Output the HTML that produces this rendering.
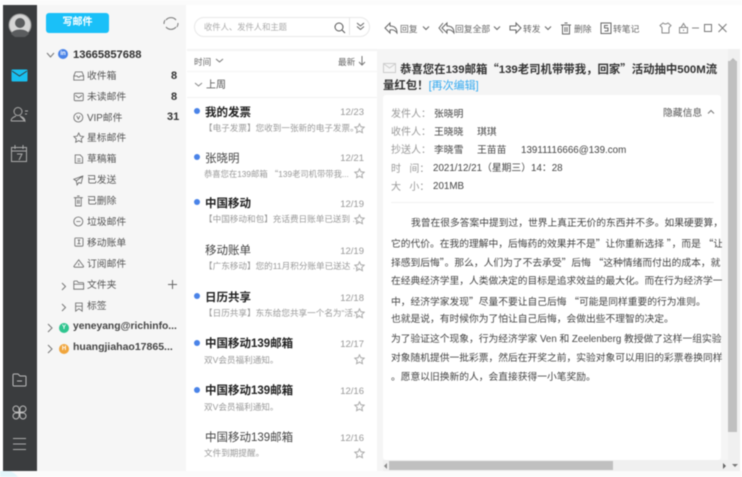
<!DOCTYPE html>
<html><head><meta charset="utf-8">
<style>
html,body{margin:0;padding:0;background:#fff}
#w{position:relative;width:742px;height:477px;overflow:hidden;background:#fff;font-family:"Liberation Sans","Noto Sans CJK SC",sans-serif;filter:blur(.45px)}
#w div,#w svg{position:absolute}
.t{white-space:nowrap;line-height:16px}
svg{fill:none;stroke:#666;stroke-width:1}
svg.ic{transform:scale(.82);transform-origin:left center;margin-left:1px}
i{font-style:normal;font-family:"Noto Sans CJK SC",sans-serif}
.f{font-size:9.8px;color:#555;left:87px;margin-top:1px}
.n{font-size:11px;font-weight:bold;color:#333}
.nm{font-size:11.5px;left:205px;color:#444;line-height:18px;white-space:nowrap;margin-top:1px}
.b{font-weight:bold;color:#222}
.d{font-size:9.5px;color:#999;left:331px;width:33px;text-align:right;line-height:14px;margin-top:1px}
.s{font-size:8.6px;color:#999;left:204px;line-height:14px;white-space:nowrap}
.dot{width:6px;height:6px;border-radius:3px;background:#4a83e8;left:194px}
.tb{font-size:8.8px;color:#666;line-height:14px;white-space:nowrap;margin-top:1px}
.lb{font-size:10px;color:#999;line-height:14px;left:391px;white-space:nowrap;margin-top:2px}
.v{font-size:9.8px;color:#444;line-height:14px;white-space:nowrap;margin-top:2px}
.p{font-size:9.75px;color:#444;line-height:14px;left:391px;width:331px;overflow:hidden;white-space:nowrap;margin-top:2px}
.bd{color:#fff;font-size:6px;font-weight:bold;text-align:center;line-height:10px;width:10px;height:10px;border-radius:5px;left:59px}
</style></head><body><div id="w">
<div style="left:0;top:0;width:742px;height:5px;background:#fbfbfb"></div>
<div style="left:3px;top:5px;width:34px;height:466px;background:#3a3c3e"></div>
<div style="left:37px;top:5px;width:149px;height:466px;background:#f6f6f6"></div>
<div style="left:186px;top:5px;width:554px;height:44px;background:#fff"></div>
<div style="left:187px;top:49px;width:190px;height:422px;background:#fff"></div>
<div style="left:187px;top:49px;width:190px;height:2px;background:#f4f4f4"></div>
<div style="left:187px;top:71px;width:190px;height:1px;background:#f4f4f4"></div>
<div style="left:187px;top:97px;width:190px;height:1px;background:#f2f2f2"></div>
<div style="left:377px;top:49px;width:363px;height:422px;background:#f5f5f5"></div>
<div style="left:383px;top:95px;width:338px;height:365px;background:#fff;border-radius:3px"></div>

<!-- left rail -->
<svg style="left:8px;top:13px;width:24px;height:24px"><circle cx="12" cy="12" r="11" fill="#d5d5d5" stroke="#999" stroke-width="1"/><circle cx="12" cy="10" r="5" fill="#5a5c5e" stroke="none"/><path d="M3 21c2-6 16-6 18 0l-4 3H7z" fill="#5a5c5e" stroke="none"/></svg>
<svg style="left:11px;top:69px;width:17px;height:13px"><rect width="16" height="12" y=".5" x=".5" rx="1" fill="#18bff0" stroke="none"/><path d="M1 2l7.500 5L16 2" stroke="#3a3c3e" stroke-width="1"/></svg>
<svg style="left:10px;top:106px;width:19px;height:17px;stroke:#aaa"><circle cx="8" cy="5.500" r="4"/><path d="M1 15c0-3 3-4 5-5M10 10c2 1 5 2 5 5zM1 15h14M15 5h3M15 8h2"/></svg>
<svg style="left:11px;top:145px;width:17px;height:18px;stroke:#aaa"><rect x=".5" y="2.500" width="15" height="14"/><path d="M.5 6h15M4 0v4M12 0v4M6 9h5l-3 6"/></svg>
<svg style="left:12px;top:373px;width:15px;height:14px;stroke:#bbb"><path d="M1 2.500q0-1.500 1-1.500h4l2 2h5q1 0 1 1v8q0 1-1 1H2q-1 0-1-1zM5 8h5"/></svg>
<svg style="left:12px;top:405px;width:15px;height:15px;stroke:#bbb"><path d="M7 4a3 3 0 1 0-3 3h3zM8 4a3 3 0 1 1 3 3H8zM7 11a3 3 0 1 1-3-3h3zM8 11a3 3 0 1 0 3-3H8z"/></svg>
<svg style="left:12px;top:437px;width:15px;height:14px;stroke:#aaa"><path d="M1 1.500h13M1 7h13M1 12.500h13"/></svg>

<!-- folder panel -->
<div class="t" style="left:46px;top:13px;width:63px;height:20px;background:#1ac0f8;border-radius:3px;color:#fff;font-size:10px;font-weight:bold;text-align:center;line-height:20px">写邮件</div>
<svg style="left:163px;top:15px;width:16px;height:17px;stroke:#777"><path d="M3 5A6.500 6.500 0 0 1 13 5M13 12A6.500 6.500 0 0 1 3 12"/><path d="M1 9a7 7 0 0 1 1-4M15 8a7 7 0 0 1-1 4"/></svg>
<svg style="left:46px;top:52px;width:9px;height:7px;stroke:#777"><path d="M1 1l3.500 4L8 1"/></svg>
<div class="bd" style="left:58px;top:49px;background:#4a83e8">in</div>
<div class="t" style="left:73px;top:47px;font-size:11.2px;font-weight:bold;color:#333">13665857688</div>
<svg class="ic" style="left:72px;top:70px;width:14px;height:12px"><path d="M3 1h8l2 5v5H1V6zM1 6h4q2 3 4 0h4"/></svg>
<div class="t f" style="top:68px">收件箱</div><div class="t n" style="top:68px;left:171px">8</div>
<svg class="ic" style="left:72px;top:91px;width:14px;height:12px"><rect x="1.500" y="1.500" width="11" height="9" rx="1"/><path d="M3 4l4 3 4-3"/></svg>
<div class="t f" style="top:89px">未读邮件</div><div class="t n" style="top:89px;left:171px">8</div>
<svg class="ic" style="left:72px;top:111px;width:13px;height:13px"><circle cx="6.500" cy="6.500" r="5.500"/><path d="M4.500 4.500l2 4 2-4"/></svg>
<div class="t f" style="top:110px">VIP邮件</div><div class="t n" style="top:109px;left:167px">31</div>
<svg class="ic" style="left:72px;top:131px;width:14px;height:13px"><path d="M7 1l1.800 3.800 4.200.5-3 2.900.8 4.100L7 10.300 3.200 12.300 4 8.200 1 5.300l4.200-.5z"/></svg>
<div class="t f" style="top:130px">星标邮件</div>
<svg class="ic" style="left:73px;top:153px;width:12px;height:12px"><path d="M1.500 1h6l3 3v7h-9zM4 6h4M4 8.500h4"/></svg>
<div class="t f" style="top:151px">草稿箱</div>
<svg class="ic" style="left:72px;top:174px;width:13px;height:13px"><path d="M12 1L1 5l3 2 1 5 2-3 3 1zM4 7l8-6"/></svg>
<div class="t f" style="top:172px">已发送</div>
<svg class="ic" style="left:72px;top:194px;width:13px;height:14px"><path d="M1 3h11M3 3v10h7V3M5 1h3M5.500 5.500v5M7.500 5.500v5"/></svg>
<div class="t f" style="top:193px">已删除</div>
<svg class="ic" style="left:72px;top:215px;width:14px;height:13px"><circle cx="6.500" cy="6.500" r="5.500"/><path d="M4 6.500h5"/></svg>
<div class="t f" style="top:214px">垃圾邮件</div>
<svg class="ic" style="left:73px;top:236px;width:13px;height:13px"><rect x="1" y="1" width="10" height="10" rx="1"/><path d="M4.500 3.500h3M6 3.500v4M4 8h4"/></svg>
<div class="t f" style="top:235px">移动账单</div>
<svg class="ic" style="left:72px;top:257px;width:14px;height:13px"><path d="M1 10l6-8 6 8q0 1-1 1H2q-1 0-1-1zM7 6v3"/></svg>
<div class="t f" style="top:256px">订阅邮件</div>
<svg style="left:61px;top:282px;width:6px;height:9px;stroke:#777"><path d="M1 1l3.500 3.500L1 8"/></svg>
<svg class="ic" style="left:72px;top:279px;width:14px;height:13px"><path d="M1 2q0-1 1-1h3l1.500 2H12q1 0 1 1v7H1zM1 5h12"/></svg>
<div class="t f" style="top:277px">文件夹</div>
<svg style="left:168px;top:280px;width:9px;height:9px;stroke:#666"><path d="M4.500 0v9M0 4.500h9"/></svg>
<svg style="left:61px;top:303px;width:6px;height:9px;stroke:#777"><path d="M1 1l3.500 3.500L1 8"/></svg>
<svg class="ic" style="left:73px;top:301px;width:12px;height:13px"><path d="M2 1h8v10L6 8l-4 3zM2 5h8"/></svg>
<div class="t f" style="top:298px">标签</div>
<svg style="left:47px;top:323px;width:7px;height:10px;stroke:#777"><path d="M1 1l4 4-4 4"/></svg>
<div class="bd" style="top:323px;background:#2fc58f">Y</div>
<div class="t" style="left:73px;top:319px;font-size:10.3px;font-weight:bold;color:#444">yeneyang@richinfo...</div>
<svg style="left:47px;top:344px;width:7px;height:10px;stroke:#777"><path d="M1 1l4 4-4 4"/></svg>
<div class="bd" style="top:344px;background:#f0a53c">H</div>
<div class="t" style="left:73px;top:339px;font-size:10.5px;font-weight:bold;color:#444">huangjiahao17865...</div>

<!-- search -->
<div style="left:194px;top:17px;width:174px;height:18px;border:1px solid #e8e8e8;border-radius:10px;background:#fff"></div>
<div class="t" style="left:204px;top:19px;font-size:8.3px;color:#aaa">收件人、发件人和主题</div>
<svg style="left:333px;top:21px;width:13px;height:13px;stroke:#555"><circle cx="6" cy="6" r="4"/><path d="M9 9l3 3"/></svg>
<div style="left:349px;top:18px;width:1px;height:17px;background:#e6e6e6"></div>
<svg style="left:356px;top:22px;width:9px;height:9px;stroke:#666"><path d="M1 1l3.500 3L8 1M1 4.500l3.500 3 3.500-3"/></svg>

<!-- list head -->
<div class="t" style="left:194px;top:54px;font-size:8.600px;color:#666">时间</div>
<svg style="left:215px;top:58px;width:9px;height:6px;stroke:#777"><path d="M1 1l3.500 3L8 1"/></svg>
<div class="t" style="left:338px;top:54px;font-size:8.600px;color:#666">最新</div>
<svg style="left:358px;top:55px;width:8px;height:11px;stroke:#777"><path d="M4 1v9M1 7l3 3 3-3"/></svg>
<svg style="left:194px;top:82px;width:9px;height:6px;stroke:#888"><path d="M1 1l3.500 3L8 1"/></svg>
<div class="t" style="left:206px;top:78px;font-size:10px;color:#555">上周</div>

<!-- list rows -->
<div class="dot" style="top:108px"></div><div class="nm b" style="top:103px">我的发票</div><div class="d" style="top:105px">12/23</div><div class="s" style="top:121px">【电子发票】您收到一张新的电子发票。</div>
<div class="dot" style="top:154px"></div><div class="nm" style="top:149px">张晓明</div><div class="d" style="top:151px">12/21</div><div class="s" style="top:167px;font-size:8.3px">恭喜您在139邮箱 <i>“</i>139老司机带带我...</div>
<div class="dot" style="top:199px"></div><div class="nm b" style="top:194px">中国移动</div><div class="d" style="top:197px">12/19</div><div class="s" style="top:212px">【中国移动和包】充话费日账单已送到 ...</div>
<div class="nm" style="top:241px">移动账单</div><div class="d" style="top:244px">12/19</div><div class="s" style="top:259px">【广东移动】您的11月积分账单已送达 ...</div>
<div class="dot" style="top:293px"></div><div class="nm b" style="top:288px">日历共享</div><div class="d" style="top:291px">12/18</div><div class="s" style="top:306px">【日历共享】东东给您共享一个名为“活...</div>
<div class="dot" style="top:340px"></div><div class="nm b" style="top:334px">中国移动139邮箱</div><div class="d" style="top:337px">12/17</div><div class="s" style="top:353px">双V会员福利通知。</div>
<div class="dot" style="top:387px"></div><div class="nm b" style="top:381px">中国移动139邮箱</div><div class="d" style="top:384px">12/16</div><div class="s" style="top:400px">双V会员福利通知。</div>
<div class="nm" style="top:428px">中国移动139邮箱</div><div class="d" style="top:431px">12/16</div><div class="s" style="top:446px">文件到期提醒。</div>
<svg style="left:354px;top:123px;width:11px;height:11px;stroke:#aaa"><path d="M5.500 .8l1.400 3 3.300.4-2.400 2.200.6 3.300-2.900-1.600-2.900 1.600.6-3.300L.8 4.200l3.300-.4z"/></svg>
<svg style="left:354px;top:168px;width:11px;height:11px;stroke:#aaa"><path d="M5.500 .8l1.400 3 3.300.4-2.400 2.200.6 3.300-2.900-1.600-2.900 1.600.6-3.300L.8 4.200l3.300-.4z"/></svg>
<svg style="left:354px;top:214px;width:11px;height:11px;stroke:#aaa"><path d="M5.500 .8l1.400 3 3.300.4-2.400 2.200.6 3.300-2.900-1.600-2.900 1.600.6-3.300L.8 4.200l3.300-.4z"/></svg>
<svg style="left:354px;top:261px;width:11px;height:11px;stroke:#aaa"><path d="M5.500 .8l1.400 3 3.300.4-2.400 2.200.6 3.300-2.900-1.600-2.900 1.600.6-3.300L.8 4.200l3.300-.4z"/></svg>
<svg style="left:354px;top:308px;width:11px;height:11px;stroke:#aaa"><path d="M5.500 .8l1.400 3 3.300.4-2.400 2.200.6 3.300-2.900-1.600-2.900 1.600.6-3.300L.8 4.200l3.300-.4z"/></svg>
<svg style="left:354px;top:354px;width:11px;height:11px;stroke:#aaa"><path d="M5.500 .8l1.400 3 3.300.4-2.400 2.200.6 3.300-2.900-1.600-2.900 1.600.6-3.300L.8 4.200l3.300-.4z"/></svg>
<svg style="left:354px;top:401px;width:11px;height:11px;stroke:#aaa"><path d="M5.500 .8l1.400 3 3.300.4-2.400 2.200.6 3.300-2.900-1.600-2.900 1.600.6-3.300L.8 4.200l3.300-.4z"/></svg>
<svg style="left:354px;top:448px;width:11px;height:11px;stroke:#aaa"><path d="M5.500 .8l1.400 3 3.300.4-2.400 2.200.6 3.300-2.900-1.600-2.900 1.600.6-3.300L.8 4.200l3.300-.4z"/></svg>

<!-- toolbar -->
<svg style="left:384px;top:22px;width:14px;height:12px"><path d="M6 1L1 6l5 5V8q4-1 7 3 0-7-7-7z"/></svg>
<div class="tb" style="left:400px;top:21px">回复</div>
<svg style="left:422px;top:26px;width:8px;height:5px"><path d="M1 .5l3 3 3-3"/></svg>
<svg style="left:438px;top:22px;width:17px;height:12px"><path d="M5 1L1 6l4 5M9 1L4 6l5 5V8q4-1 7 3 0-7-7-7z"/></svg>
<div class="tb" style="left:455px;top:21px">回复全部</div>
<svg style="left:493px;top:26px;width:8px;height:5px"><path d="M1 .5l3 3 3-3"/></svg>
<svg style="left:509px;top:22px;width:13px;height:12px"><path d="M1 4h6V1l5 5-5 5V8H1z"/></svg>
<div class="tb" style="left:523px;top:21px">转发</div>
<svg style="left:544px;top:26px;width:8px;height:5px"><path d="M1 .5l3 3 3-3"/></svg>
<svg style="left:560px;top:22px;width:12px;height:13px"><path d="M1 3h10M2.500 3v9h7V3M4.500 1h3M5 5v5M7 5v5"/></svg>
<div class="tb" style="left:574px;top:21px">删除</div>
<svg style="left:600px;top:22px;width:12px;height:13px"><rect x="1" y="1" width="10" height="10.500"/><path d="M8 3.500H4.500v2.500H8V9H4.500"/></svg>
<div class="tb" style="left:613px;top:21px">转笔记</div>
<svg style="left:659px;top:22px;width:13px;height:12px;stroke:#888"><path d="M4 1L1 3.500 3 5.500V11h7V5.500l2-2L9 1Q6.500 3 4 1z"/></svg>
<svg style="left:678px;top:22px;width:11px;height:12px;stroke:#888"><path d="M1.500 5.500h8v5.500h-8zM3 5.500l2.500-4 2.500 4M5.500 7.500v1.500"/></svg>
<svg style="left:691px;top:24px;width:9px;height:8px;stroke:#888"><path d="M1 4h7"/></svg>
<svg style="left:703px;top:23px;width:10px;height:10px;stroke:#777"><rect x="1.500" y="1.500" width="7" height="7"/></svg>
<svg style="left:717px;top:23px;width:11px;height:10px;stroke:#777"><path d="M1.500 1l8 8M9.500 1l-8 8"/></svg>

<!-- subject -->
<svg style="left:383px;top:62px;width:14px;height:12px;stroke:#ccc"><rect x=".5" y="1.500" width="12" height="9"/><path d="M1 2l5.500 4L12 2"/></svg>
<div class="t" style="left:400px;top:61px;font-size:11.4px;font-weight:bold;color:#333">恭喜您在139邮箱<i>“</i>139老司机带带我，回家<i>”</i>活动抽中500M流</div>
<div class="t" style="left:383px;top:78px;font-size:11.4px;font-weight:bold;color:#333">量红包！<span style="font-weight:normal;color:#35aaf0;font-size:11px">[再次编辑]</span></div>

<!-- header info -->
<div class="lb" style="top:106px">发件人：</div><div class="v" style="left:434px;top:106px">张晓明</div>
<div class="lb" style="top:124px">收件人：</div><div class="v" style="left:434px;top:124px">王晓晓</div><div class="v" style="left:477px;top:124px">琪琪</div>
<div class="lb" style="top:142px">抄送人：</div><div class="v" style="left:434px;top:142px">李晓雪</div><div class="v" style="left:477px;top:142px">王苗苗</div><div class="v" style="left:521px;top:142px">13911116666@139.com</div>
<div class="lb" style="top:161px">时&nbsp;&nbsp;&nbsp;间：</div><div class="v" style="left:433px;top:160px">2021/12/21（星期三）14：28</div>
<div class="lb" style="top:179px">大&nbsp;&nbsp;&nbsp;小：</div><div class="v" style="left:433px;top:178px">201MB</div>
<div class="t" style="left:663px;top:105px;font-size:9.800px;color:#555;margin-top:1px">隐藏信息</div>
<svg style="left:707px;top:109px;width:8px;height:6px;stroke:#777"><path d="M1 4.500l3-3 3 3"/></svg>
<div style="left:391px;top:202px;width:323px;height:1px;background:#f2f2f2"></div>

<!-- body -->
<div class="p" style="top:215px;text-indent:20px">我曾在很多答案中提到过，世界上真正无价的东西并不多。如果硬要算，</div>
<div class="p" style="top:234px">它的代价。在我的理解中，后悔药的效果并不是<i>”</i>让你重新选择 <i>”</i>，而是 <i>“</i>让</div>
<div class="p" style="top:253px">择感到后悔<i>”</i>。那么，人们为了不去承受<i>”</i>后悔 <i>“</i>这种情绪而付出的成本，就</div>
<div class="p" style="top:273px">在经典经济学里，人类做决定的目标是追求效益的最大化。而在行为经济学一</div>
<div class="p" style="top:292px">中，经济学家发现<i>”</i>尽量不要让自己后悔 <i>“</i>可能是同样重要的行为准则。</div>
<div class="p" style="top:311px">也就是说，有时候你为了怕让自己后悔，会做出些不理智的决定。</div>
<div class="p" style="top:331px">为了验证这个现象，行为经济学家 Ven 和 Zeelenberg 教授做了这样一组实验</div>
<div class="p" style="top:350px">对象随机提供一批彩票，然后在开奖之前，实验对象可以用旧的彩票卷换同样</div>
<div class="p" style="top:369px">。愿意以旧换新的人，会直接获得一小笔奖励。</div>

<!-- scrollbars -->
<div style="left:728px;top:49px;width:12px;height:422px;background:#f0f0f0"></div>
<div style="left:728px;top:61px;width:9px;height:371px;background:#c0c0c0"></div>
<div style="left:730px;top:55px;width:0;height:0;border:3px solid transparent;border-bottom:3px solid #bbb"></div>
<div style="left:383px;top:460px;width:345px;height:11px;background:#f0f0f0"></div>
<div style="left:389px;top:461px;width:224px;height:9px;background:#c0c0c0"></div>
<div style="left:381px;top:463px;width:0;height:0;border:3px solid transparent;border-right:3px solid #888"></div>
<div style="left:723px;top:463px;width:0;height:0;border:3px solid transparent;border-left:3px solid #666"></div>
<div style="left:732px;top:464px;width:0;height:0;border:3px solid transparent;border-top:3px solid #777"></div>
<div style="left:0;top:471px;width:742px;height:6px;background:#fbfbfb"></div>
<svg style="left:0;top:465px;width:20px;height:12px;stroke:none;fill:#e3f6fb"><path d="M0 6h10q5 2 8 6H0z"/></svg>
</div></body></html>
